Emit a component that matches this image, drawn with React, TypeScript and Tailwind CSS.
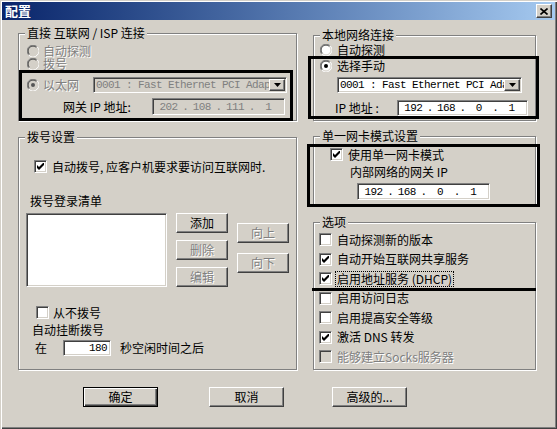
import React from "react";

const SUNKEN =
  "border border-t-[#808080] border-l-[#808080] border-b-white border-r-white shadow-[inset_1px_1px_0_#404040,inset_-1px_-1px_0_#d4d0c8]";
const RAISED =
  "border border-t-white border-l-white border-b-[#404040] border-r-[#404040] shadow-[inset_-1px_-1px_0_#808080,inset_1px_1px_0_#d4d0c8]";
const DIS = "text-[#808080] [text-shadow:1px_1px_0_#fff]";
const MONO = "font-['Liberation_Mono',monospace] text-[11px] tracking-[-0.6px]";

function Radio({ checked, disabled }: { checked?: boolean; disabled?: boolean }) {
  return (
    <svg width="12" height="12" viewBox="0 0 12 12" className="shrink-0">
      <circle cx="6" cy="6" r="5.5" fill={disabled ? "#d4d0c8" : "#fff"} />
      <path d="M10.2 1.8 A5.5 5.5 0 0 0 1.8 10.2" stroke="#808080" fill="none" />
      <path d="M1.8 10.2 A5.5 5.5 0 0 0 10.2 1.8" stroke="#fff" fill="none" />
      <path d="M9.5 2.5 A4.5 4.5 0 0 0 2.5 9.5" stroke="#404040" fill="none" />
      <path d="M2.5 9.5 A4.5 4.5 0 0 0 9.5 2.5" stroke="#d4d0c8" fill="none" />
      {checked && <circle cx="6" cy="6" r="2" fill={disabled ? "#555" : "#000"} />}
    </svg>
  );
}

function Check({ checked, disabled }: { checked?: boolean; disabled?: boolean }) {
  return (
    <span
      className={`${SUNKEN} w-[13px] h-[13px] shrink-0 flex items-center justify-center ${
        disabled ? "bg-[#d4d0c8]" : "bg-white"
      }`}
    >
      {checked && (
        <svg width="7" height="7" viewBox="0 0 7 7">
          <path d="M0 2 L2 4 L7 -1 L7 2 L2 7 L0 5 Z" fill="#000" />
        </svg>
      )}
    </span>
  );
}

function Btn({
  label,
  className,
  disabled,
  isDefault,
}: {
  label: string;
  className: string;
  disabled?: boolean;
  isDefault?: boolean;
}) {
  const frame = isDefault
    ? "border border-black shadow-[inset_1px_1px_0_#fff,inset_-1px_-1px_0_#404040,inset_-2px_-2px_0_#808080]"
    : RAISED;
  return (
    <div
      className={`${frame} bg-[#d4d0c8] flex items-center justify-center text-[12px] leading-[14px] ${
        disabled ? DIS : "text-black"
      } ${className}`}
    >
      {label}
    </div>
  );
}

function Combo({ disabled, className }: { disabled?: boolean; className: string }) {
  return (
    <div
      className={`${SUNKEN} flex items-center h-[16px] p-[1px] ${
        disabled ? "bg-[#d4d0c8]" : "bg-white"
      } ${className}`}
    >
      <div
        className={`flex-1 overflow-hidden whitespace-nowrap pl-[1px] leading-[12px] ${MONO} ${
          disabled ? "text-[#808080]" : "text-black"
        }`}
      >
        0001 : Fast Ethernet PCI Adap
      </div>
      <div className={`${RAISED} w-[16px] h-full bg-[#d4d0c8] flex items-center justify-center shrink-0`}>
        <svg width="7" height="4" viewBox="0 0 7 4">
          <path d="M0 0 L7 0 L3.5 4 Z" fill="#000" />
        </svg>
      </div>
    </div>
  );
}

function IP({
  values,
  disabled,
  className,
}: {
  values: string[];
  disabled?: boolean;
  className: string;
}) {
  return (
    <div
      className={`${SUNKEN} flex items-center px-[2px] ${MONO} leading-[12px] ${
        disabled ? "bg-[#d4d0c8] text-[#808080]" : "bg-white text-black"
      } ${className}`}
    >
      {values.map((v, i) => (
        <React.Fragment key={i}>
          {i > 0 && <span className="w-[6px] text-center">.</span>}
          <span className="flex-1 text-center">{v}</span>
        </React.Fragment>
      ))}
    </div>
  );
}

function Group({
  title,
  className,
  children,
}: {
  title: string;
  className: string;
  children: React.ReactNode;
}) {
  return (
    <div
      className={`relative border border-[#808080] shadow-[inset_1px_1px_0_#fff,1px_1px_0_#fff] ${className}`}
    >
      <span className="absolute left-[6px] top-[-8px] bg-[#d4d0c8] px-[2px] leading-[14px] whitespace-nowrap">
        {title}
      </span>
      {children}
    </div>
  );
}

export default function App() {
  return (
    <div className="relative w-[557px] h-[429px] bg-[#d4d0c8] overflow-hidden font-['Noto_Sans_CJK_SC','Noto_Sans',sans-serif] text-[12px] leading-[14px] text-black shadow-[inset_1px_1px_0_#d4d0c8,inset_2px_2px_0_#fff,inset_-1px_-1px_0_#404040,inset_-2px_-2px_0_#808080]">
      {/* title bar */}
      <div className="mx-[2px] mt-[2px] h-[18px] flex items-center bg-linear-to-r from-[#0a246a] to-[#a6caf0] pl-[3px] pr-[3px]">
        <span className="text-white font-bold text-[13px] leading-[16px]">配置</span>
        <div className={`${RAISED} ml-auto w-[16px] h-[14px] bg-[#d4d0c8] flex items-center justify-center`}>
          <svg width="8" height="7" viewBox="0 0 8 7">
            <path d="M0.5 0.5 L7.5 6.5 M7.5 0.5 L0.5 6.5" stroke="#000" strokeWidth="1.6" />
          </svg>
        </div>
      </div>

      <div className="flex pl-[18px]">
        {/* left column */}
        <div className="w-[279px] pt-[13px]">
          <Group title="直接 互联网 / ISP  连接" className="h-[88px]">
            <div className="pl-[8px] pt-[10px] flex flex-col">
              <div className="h-[13px] flex items-center gap-[4px]">
                <Radio disabled />
                <span className={`${DIS} leading-[12px]`}>自动探测</span>
              </div>
              <div className="h-[13px] flex items-center gap-[4px]">
                <Radio disabled />
                <span className={`${DIS} leading-[12px]`}>拨号</span>
              </div>
              <div className="mt-[7px] h-[16px] flex items-center">
                <div className="w-[66px] flex items-center gap-[4px]">
                  <Radio checked disabled />
                  <span className={DIS}>以太网</span>
                </div>
                <Combo disabled className="w-[194px]" />
              </div>
              <div className="mt-[5px] h-[17px] flex items-center pl-[36px]">
                <span className="w-[89px]">网关 IP 地址:</span>
                <IP disabled values={["202", "108", "111", "1"]} className="w-[133px] h-[17px]" />
              </div>
            </div>
          </Group>

          <Group title="拨号设置" className="mt-[16px] h-[233px]">
            <div className="pt-[22px] flex flex-col">
              <div className="pl-[15px] h-[13px] flex items-center gap-[5px]">
                <Check checked />
                <span className="whitespace-nowrap">自动拨号, 应客户机要求要访问互联网时.</span>
              </div>
              <div className="pl-[11px] mt-[21px] h-[14px]">拨号登录清单</div>
              <div className="pl-[7px] mt-[5px] flex">
                <div className={`${SUNKEN} bg-white w-[141px] h-[74px]`} />
                <div className="ml-[9px] flex flex-col gap-[7px]">
                  <Btn label="添加" className="w-[52px] h-[20px]" />
                  <Btn label="删除" disabled className="w-[52px] h-[20px]" />
                  <Btn label="编辑" disabled className="w-[52px] h-[20px]" />
                </div>
                <div className="ml-[9px] pt-[10px] flex flex-col gap-[10px]">
                  <Btn label="向上" disabled className="w-[52px] h-[20px]" />
                  <Btn label="向下" disabled className="w-[52px] h-[20px]" />
                </div>
              </div>
              <div className="pl-[17px] mt-[19px] h-[13px] flex items-center gap-[4px]">
                <Check />
                <span>从不拨号</span>
              </div>
              <div className="pl-[13px] mt-[4px] h-[14px]">自动挂断拨号</div>
              <div className="pl-[16px] mt-[3px] h-[16px] flex items-center">
                <span className="w-[28px]">在</span>
                <div
                  className={`${SUNKEN} bg-white w-[48px] h-[16px] flex items-center justify-end pr-[3px] ${MONO} leading-[12px]`}
                >
                  180
                </div>
                <span className="ml-[9px]">秒空闲时间之后</span>
              </div>
            </div>
          </Group>
        </div>

        {/* right column */}
        <div className="w-[223px] ml-[16px] pt-[15px]">
          <Group title="本地网络连接" className="h-[86px]">
            <div className="pt-[7px] pl-[6px] flex flex-col">
              <div className="h-[13px] flex items-center gap-[5px]">
                <Radio />
                <span className="leading-[12px]">自动探测</span>
              </div>
              <div className="mt-[3px] h-[13px] flex items-center gap-[5px]">
                <Radio checked />
                <span className="leading-[12px]">选择手动</span>
              </div>
              <div className="mt-[5px] pl-[17px]">
                <Combo className="w-[185px]" />
              </div>
              <div className="mt-[7px] pl-[15px] flex items-center">
                <span className="w-[62px]">IP 地址 :</span>
                <IP values={["192", "168", "0", "1"]} className="w-[131px] h-[16px]" />
              </div>
            </div>
          </Group>

          <Group title="单一网卡模式设置" className="mt-[15px] h-[69px]">
            <div className="pt-[11px] flex flex-col">
              <div className="pl-[16px] h-[13px] flex items-center gap-[5px]">
                <Check checked />
                <span className="leading-[12px]">使用单一网卡模式</span>
              </div>
              <div className="pl-[36px] mt-[4px] h-[14px]">内部网络的网关 IP</div>
              <div className="pl-[43px] mt-[4px]">
                <IP values={["192", "168", "0", "1"]} className="w-[133px] h-[17px]" />
              </div>
            </div>
          </Group>

          <Group title="选项" className="mt-[17px] h-[148px]">
            <div className="pt-[7px] pl-[5px] flex flex-col">
              <div className="h-[19.5px] flex items-center gap-[5px]">
                <Check />
                <span>自动探测新的版本</span>
              </div>
              <div className="h-[19.5px] flex items-center gap-[5px]">
                <Check checked />
                <span>自动开始互联网共享服务</span>
              </div>
              <div className="h-[19.5px] flex items-center gap-[4px]">
                <Check checked />
                <span className="outline-1 outline-dotted outline-black px-[1px]">启用地址服务 (DHCP)</span>
              </div>
              <div className="h-[19.5px] flex items-center gap-[5px]">
                <Check />
                <span>启用访问日志</span>
              </div>
              <div className="h-[19.5px] flex items-center gap-[5px]">
                <Check />
                <span>启用提高安全等级</span>
              </div>
              <div className="h-[19.5px] flex items-center gap-[5px]">
                <Check checked />
                <span>激活 DNS 转发</span>
              </div>
              <div className="h-[19.5px] flex items-center gap-[5px]">
                <Check disabled />
                <span className={DIS}>能够建立Socks服务器</span>
              </div>
            </div>
          </Group>
        </div>
      </div>

      {/* bottom buttons */}
      <div className="flex pt-[17px] pl-[83px]">
        <Btn label="确定" isDefault className="w-[75px] h-[20px]" />
        <Btn label="取消" className="ml-[51px] w-[75px] h-[20px]" />
        <Btn label="高级的..." className="ml-[48px] w-[75px] h-[20px]" />
      </div>

      {/* annotation overlays */}
      <div className="pointer-events-none absolute left-[19px] top-[70px] w-[274px] h-[51px] border-[3px] border-black" />
      <div className="pointer-events-none absolute left-[308px] top-[56px] w-[231px] h-[63px] border-[3px] border-black" />
      <div className="pointer-events-none absolute left-[307px] top-[144px] w-[233px] h-[63px] border-[3px] border-black" />
      <div className="pointer-events-none absolute left-[312px] top-[288px] w-[224px] h-[3px] bg-black" />
    </div>
  );
}
